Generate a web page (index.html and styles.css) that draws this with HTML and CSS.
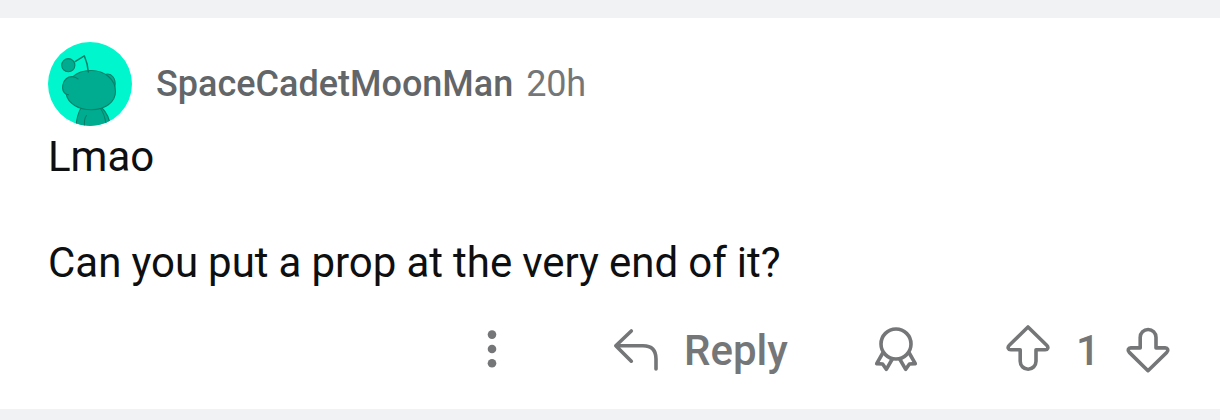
FILE: index.html
```html
<!DOCTYPE html>
<html lang="en">
<head>
<meta charset="utf-8">
<title>Comment</title>
<link rel="stylesheet" href="styles.css">
</head>
<body>
<article class="comment">
  <header class="head">
    <svg class="avatar" viewBox="48 42 84 84">
      <defs><clipPath id="disc"><circle cx="90" cy="84" r="42"/></clipPath></defs>
      <g clip-path="url(#disc)">
        <rect x="48" y="42" width="84" height="84" fill="#00f6cd"/>
        <g fill="#00ac90" stroke="#078069" stroke-width="1.1" stroke-linecap="round" stroke-linejoin="round">
          <path d="M76 127C76.500 119 78 113 81 108H102C106 112 109.500 118 110.500 127Z"/>
          <path d="M84.500 127C84 121 84.500 118 86.500 115.500M100.500 108.500C104 113 105.500 119 106.500 127" fill="none"/>
          <path d="M106 74.300C111.500 72.800 116.500 79 114.800 86.500"/>
          <path d="M73 76.700C77.500 72.300 84 70.500 91 70.500C105 70.500 115.500 79.500 115.500 91.500C115.500 102.500 104.500 109.700 91.500 109.700C78.500 109.700 68 103.500 66.200 94.200C63.200 92.500 62.200 88.500 62.800 85C63.800 80 67.500 76.200 73 76.700Z"/>
          <path d="M73 76.700C75 76.900 76.500 77.500 78 78.900M66.200 94.200L68.500 94.800" fill="none"/>
          <path d="M75 61.700L84.300 55.800C86.500 61 88 66 88.300 72" fill="none" stroke-width="1.500"/>
          <circle cx="68.300" cy="65.200" r="6.600"/>
        </g>
      </g>
    </svg>
    <span class="name">SpaceCadetMoonMan</span>
    <span class="age">20h</span>
  </header>
  <div class="body">
    <p>Lmao</p>
    <p>Can you put a prop at the very end of it?</p>
  </div>
  <footer class="actions">
    <svg class="icon more" viewBox="486 324 12 50"><g fill="#747678"><circle cx="492" cy="334.600" r="4.300"/><circle cx="492" cy="349" r="4.300"/><circle cx="492" cy="363.300" r="4.300"/></g></svg>
    <div class="reply">
      <svg class="icon arrow" viewBox="612 324 48 50"><path d="M631.300 331L615.800 345.800L631.300 361.200M615.800 345.800H643Q656 345.800 656 359V369"/></svg>
      <span class="label">Reply</span>
    </div>
    <svg class="icon award" viewBox="872 324 48 50"><circle cx="896" cy="344" r="15"/><path d="M882.500 353.500L876.700 363.600L882.600 364L886.300 369.300L892.300 359M909.500 353.500L915.300 363.600L909.400 364L905.700 369.300L899.700 359"/></svg>
    <div class="votes">
      <svg class="icon up" viewBox="1004 324 48 50"><path d="M1028 327L1009.300 345.300C1007.100 347.500 1008.300 349.800 1010.800 349.800H1020.200V361.300A7.900 7.900 0 0 0 1036 361.300V349.800H1045.200C1047.700 349.800 1048.900 347.500 1046.700 345.300Z"/></svg>
      <span class="label count">1</span>
      <svg class="icon down" viewBox="1124 324 48 50"><path d="M1148 370.700L1129.300 352.400C1127.100 350.200 1128.300 347.900 1130.800 347.900H1140.200V337.400A7.900 7.900 0 0 1 1156 337.400V347.900H1165.200C1167.700 347.900 1168.900 350.200 1166.700 352.400Z"/></svg>
    </div>
  </footer>
</article>
</body>
</html>
```
FILE: styles.css
```css
body {
  margin: 0;
  padding: 18px 0 11px;
  height: 391px;
  background: #f1f2f4;
  font-family: Roboto, "Liberation Sans", sans-serif;
  overflow: hidden;
}
.comment {
  box-sizing: border-box;
  height: 391px;
  padding: 24px 48px 0;
  background: #fff;
}
.head {
  display: flex;
  align-items: center;
  height: 84px;
  font-size: 36px;
  line-height: 42px;
  color: #636669;
}
.avatar {
  flex: none;
  width: 84px;
  height: 84px;
  margin-right: 24px;
}
.name {
  font-weight: 500;
  margin-right: 13px;
}
.age {
  color: #747678;
  letter-spacing: -0.3px;
}
.body {
  margin-top: 4px;
  font-size: 42px;
  line-height: 53px;
  word-spacing: -0.4px;
  color: #0e0f10;
}
.body p {
  margin: 0 0 53px;
}
.body p:last-child {
  margin-bottom: 0;
}
.actions {
  display: flex;
  align-items: center;
  height: 50px;
  margin-top: 35px;
  padding-left: 438px;
}
.icon {
  flex: none;
  width: 48px;
  height: 50px;
  fill: none;
  stroke: #747678;
  stroke-width: 3.600;
  stroke-linecap: round;
  stroke-linejoin: round;
}
.more {
  width: 12px;
  stroke: none;
}
.reply {
  display: flex;
  align-items: center;
  width: 260px;
  margin-left: 114px;
}
.label {
  padding-top: 4px;
  font-size: 42px;
  line-height: 46px;
  font-weight: 500;
  color: #747678;
}
.reply .label {
  margin-left: 24px;
}
.votes {
  display: flex;
  align-items: center;
  margin-left: 84px;
}
.count {
  width: 72px;
  text-align: center;
}
```
